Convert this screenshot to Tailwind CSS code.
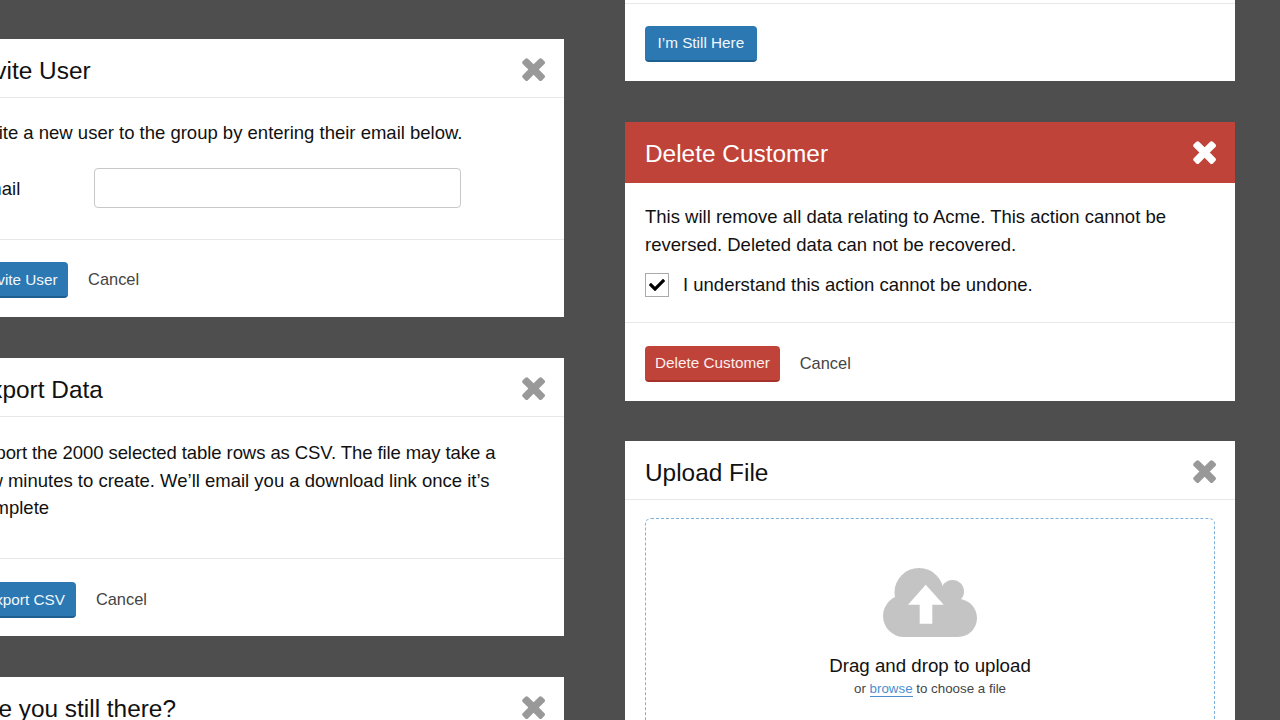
<!doctype html>
<html>
<head>
<meta charset="utf-8">
<script src="https://cdn.jsdelivr.net/npm/@tailwindcss/browser@4"></script>
</head>
<body class="m-0 h-[720px] overflow-hidden bg-[#4e4e4e] font-['Liberation_Sans',Arial,sans-serif] text-[#111]">
<div class="flex ml-[-46px] w-[1281px] gap-[61px] h-[720px] overflow-hidden">

  <!-- left column -->
  <div class="w-[610px] shrink-0 pt-[39px] flex flex-col gap-[41px]">
    <section class="bg-white h-[278px] shrink-0">
      <header class="h-[58px] border-b border-[#e8e8e8] px-[20px] flex items-center justify-between box-content">
        <h2 class="text-[24.4px] leading-none pt-[6px]">Invite User</h2>
        <svg class="w-[23px] h-[23px] mt-[2px] mr-[-0.5px] fill-[#999]" viewBox="100 250 1198 1196"><path d="M1298 1214q0 40-28 68l-136 136q-28 28-68 28t-68-28l-294-294-294 294q-28 28-68 28t-68-28l-136-136q-28-28-28-68t28-68l294-294-294-294q-28-28-28-68t28-68l136-136q28-28 68-28t68 28l294 294 294-294q28-28 68-28t68 28l136 136q28 28 28 68t-28 68l-294 294 294 294q28 28 28 68z"/></svg>
      </header>
      <div class="px-[20px] pt-[21px] pb-[31px] border-b border-[#e8e8e8] text-[18.5px] leading-[27.5px]">
        <p class="whitespace-nowrap">Invite a new user to the group by entering their email below.</p>
        <div class="flex items-center mt-[21.5px]">
          <label class="w-[120px] pt-[2px]">Email</label>
          <div class="w-[367px] h-[40px] border border-[#c8c8c8] rounded-[4px] bg-white"></div>
        </div>
      </div>
      <footer class="px-[20px] pt-[22px] flex items-center gap-[20px]">
        <button class="h-[36px] px-[10.5px] pt-[2px] rounded-[4px] bg-[#2b78b2] border-b-2 border-[#1f5f90] text-[15.3px] text-[#f2f7fb]">Invite User</button>
        <span class="text-[16.4px] text-[#444] pb-[2px]">Cancel</span>
      </footer>
    </section>

    <section class="bg-white h-[278px] shrink-0">
      <header class="h-[58px] border-b border-[#e8e8e8] px-[20px] flex items-center justify-between box-content">
        <h2 class="text-[24.4px] leading-none pt-[6px]">Export Data</h2>
        <svg class="w-[23px] h-[23px] mt-[2px] mr-[-0.5px] fill-[#999]" viewBox="100 250 1198 1196"><path d="M1298 1214q0 40-28 68l-136 136q-28 28-68 28t-68-28l-294-294-294 294q-28 28-68 28t-68-28l-136-136q-28-28-28-68t28-68l294-294-294-294q-28-28-28-68t28-68l136-136q28-28 68-28t68 28l294 294 294-294q28-28 68-28t68 28l136 136q28 28 28 68t-28 68l-294 294 294 294q28 28 28 68z"/></svg>
      </header>
      <div class="px-[20px] pt-[22px] pb-[36.5px] border-b border-[#e8e8e8] text-[18.5px] leading-[27.5px]">
        <p class="whitespace-nowrap"><span class="tracking-[-0.08px]">Export the 2000 selected table rows as CSV. The file may take a</span><br>few minutes to create. We’ll email you a download link once it’s<br>complete</p>
      </div>
      <footer class="px-[20px] pt-[23px] flex items-center gap-[20px]">
        <button class="h-[36px] px-[11px] pt-[2px] rounded-[4px] bg-[#2b78b2] border-b-2 border-[#1f5f90] text-[15.3px] text-[#f2f7fb]">Export CSV</button>
        <span class="text-[16.4px] text-[#444] pb-[2px]">Cancel</span>
      </footer>
    </section>

    <section class="bg-white h-[278px] shrink-0">
      <header class="h-[58px] border-b border-[#e8e8e8] px-[20px] flex items-center justify-between box-content">
        <h2 class="text-[24.4px] leading-none pt-[6px]">Are you still there?</h2>
        <svg class="w-[23px] h-[23px] mt-[2px] mr-[-0.5px] fill-[#999]" viewBox="100 250 1198 1196"><path d="M1298 1214q0 40-28 68l-136 136q-28 28-68 28t-68-28l-294-294-294 294q-28 28-68 28t-68-28l-136-136q-28-28-28-68t28-68l294-294-294-294q-28-28-28-68t28-68l136-136q28-28 68-28t68 28l294 294 294-294q28-28 68-28t68 28l136 136q28 28 28 68t-28 68l-294 294 294 294q28 28 28 68z"/></svg>
      </header>
    </section>
  </div>

  <!-- right column -->
  <div class="w-[610px] shrink-0 flex flex-col gap-[41px]">
    <section class="bg-white h-[81px] shrink-0">
      <div class="h-[3px] border-b border-[#e8e8e8] box-content"></div>
      <footer class="px-[20px] pt-[22px] flex items-center gap-[20px]">
        <button class="h-[36px] px-[12.5px] rounded-[4px] bg-[#2b78b2] border-b-2 border-[#1f5f90] text-[15.3px] text-[#f2f7fb]">I’m Still Here</button>
      </footer>
    </section>

    <section class="bg-white h-[279px] shrink-0">
      <header class="h-[61px] bg-[#c0433a] px-[20px] flex items-center justify-between text-white">
        <h2 class="text-[24.4px] leading-none pt-[3px]">Delete Customer</h2>
        <svg class="w-[23px] h-[23px] mr-[-1px] fill-white" viewBox="100 250 1198 1196"><path d="M1298 1214q0 40-28 68l-136 136q-28 28-68 28t-68-28l-294-294-294 294q-28 28-68 28t-68-28l-136-136q-28-28-28-68t28-68l294-294-294-294q-28-28-28-68t28-68l136-136q28-28 68-28t68 28l294 294 294-294q28-28 68-28t68 28l136 136q28 28 28 68t-28 68l-294 294 294 294q28 28 28 68z"/></svg>
      </header>
      <div class="px-[20px] pt-[20px] pb-[23px] border-b border-[#e8e8e8] text-[18.5px] leading-[27.5px]">
        <p class="whitespace-nowrap">This will remove all data relating to Acme. This action cannot be<br>reversed. Deleted data can not be recovered.</p>
        <div class="flex items-center gap-[14px] mt-[13px]">
          <span class="w-[24px] h-[24px] border border-[#aaa] flex items-center justify-center bg-white">
            <svg class="w-[16px] h-[12px] fill-black" viewBox="0 64 512 384"><path d="M173.898 439.404l-166.4-166.4c-9.997-9.997-9.997-26.206 0-36.204l36.203-36.204c9.997-9.998 26.207-9.998 36.204 0L192 312.69 432.095 72.596c9.997-9.997 26.207-9.997 36.204 0l36.203 36.204c9.997 9.997 9.997 26.206 0 36.204l-294.4 294.401c-9.998 9.997-26.207 9.997-36.204-.001z"/></svg>
          </span>
          <span>I understand this action cannot be undone.</span>
        </div>
      </div>
      <footer class="px-[20px] pt-[23px] flex items-center gap-[20px]">
        <button class="h-[36px] px-[10px] pt-[2px] rounded-[4px] bg-[#c0433a] border-b-2 border-[#a4322b] text-[15.3px] text-[#fbeeed]">Delete Customer</button>
        <span class="text-[16.4px] text-[#444] pb-[1px]">Cancel</span>
      </footer>
    </section>

    <section class="bg-white shrink-0 mt-[-1px]">
      <header class="h-[58px] border-b border-[#e8e8e8] px-[20px] flex items-center justify-between box-content">
        <h2 class="text-[24.4px] leading-none pt-[6px]">Upload File</h2>
        <svg class="w-[23px] h-[23px] mt-[2px] mr-[-0.5px] fill-[#999]" viewBox="100 250 1198 1196"><path d="M1298 1214q0 40-28 68l-136 136q-28 28-68 28t-68-28l-294-294-294 294q-28 28-68 28t-68-28l-136-136q-28-28-28-68t28-68l294-294-294-294q-28-28-28-68t28-68l136-136q28-28 68-28t68 28l294 294 294-294q28-28 68-28t68 28l136 136q28 28 28 68t-28 68l-294 294 294 294q28 28 28 68z"/></svg>
      </header>
      <div class="px-[20px] pt-[18px] pb-[20px]">
        <div class="h-[300px] border border-dashed border-[#7fb0dc] rounded-[6px] flex flex-col items-center pt-[49px]">
          <svg class="w-[94px] h-[69px] fill-[#c4c4c4]" viewBox="0 0 94 69">
            <circle cx="36" cy="24.5" r="24.5"/>
            <circle cx="69.5" cy="23.5" r="11.5"/>
            <circle cx="21" cy="48" r="21"/>
            <circle cx="75" cy="50" r="19"/>
            <rect x="21" y="30" width="54" height="39"/>
            <path fill="#fff" d="M42.7 16.7L25 36.7h11.7v19h12.6v-19h11.4z"/>
          </svg>
          <p class="text-[18.7px] leading-[27.5px] text-[#111] mt-[15px]">Drag and drop to upload</p>
          <p class="text-[13.35px] leading-[18px] text-[#444]">or <span class="text-[#4a8fd0] border-b border-[#4a8fd0]">browse</span> to choose a file</p>
        </div>
      </div>
    </section>
  </div>
</div>
</body>
</html>
